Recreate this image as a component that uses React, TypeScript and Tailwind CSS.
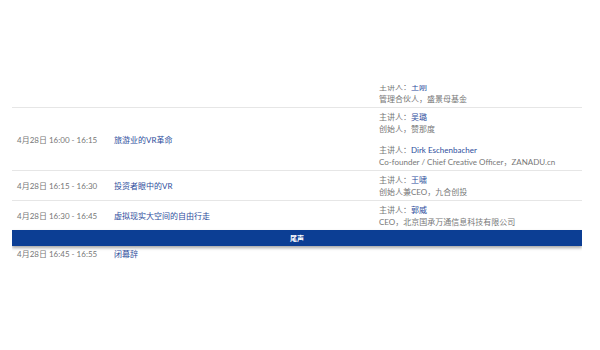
const font = { fontFamily: '"Lato", "Noto Sans CJK SC", sans-serif' };

type Speaker = { name: string; title: string };
type Row = { time: string; topic: string; speakers: Speaker[] };

const rows: Row[] = [
  {
    time: "4月28日 15:45 - 16:00",
    topic: "",
    speakers: [{ name: "王刚", title: "管理合伙人，盛景母基金" }],
  },
  {
    time: "4月28日 16:00 - 16:15",
    topic: "旅游业的VR革命",
    speakers: [
      { name: "吴璐", title: "创始人，赞那度" },
      { name: "Dirk Eschenbacher", title: "Co-founder / Chief Creative Officer，ZANADU.cn" },
    ],
  },
  {
    time: "4月28日 16:15 - 16:30",
    topic: "投资者眼中的VR",
    speakers: [{ name: "王啸", title: "创始人兼CEO，九合创投" }],
  },
  {
    time: "4月28日 16:30 - 16:45",
    topic: "虚拟现实大空间的自由行走",
    speakers: [{ name: "郭威", title: "CEO，北京国承万通信息科技有限公司" }],
  },
];

function AgendaRow({ row, first }: { row: Row; first?: boolean }) {
  return (
    <div className={`flex items-center pt-[3px] pb-[2px] ${first ? "" : "border-t border-[#e6e6e6]"}`}>
      <div className={`w-[97px] shrink-0 pl-[5px] text-[#777] ${first ? "invisible" : ""}`}>{row.time}</div>
      <div className="w-[265px] shrink-0 pl-[5px] text-[#2d4d9c]">{row.topic}</div>
      <div className="flex flex-1 flex-col gap-[9px] pl-[5px]">
        {row.speakers.map((s) => (
          <div key={s.name}>
            <div className="text-[#777]">
              主讲人：<span className="text-[#2d4d9c]">{s.name}</span>
            </div>
            <div className="text-[#777]">{s.title}</div>
          </div>
        ))}
      </div>
    </div>
  );
}

export default function App() {
  return (
    <div className="h-[350px] w-[600px] bg-white" style={font}>
      <div className="h-[85px]" />
      <div className="ml-[12px] mr-[18px] h-[180px] overflow-hidden text-[8px] leading-[12px]">
        <div className="-mt-[7px]">
          {rows.map((r, i) => (
            <AgendaRow key={r.time} row={r} first={i === 0} />
          ))}
          <div className="flex h-[16px] items-center justify-center bg-[#0c3e94] text-[7px] font-bold text-white shadow-[0_2px_3px_rgba(0,0,0,0.35)]">
            尾声
          </div>
          <div className="flex items-center py-[2px]">
            <div className="w-[97px] shrink-0 pl-[5px] text-[#777]">4月28日 16:45 - 16:55</div>
            <div className="w-[265px] shrink-0 pl-[5px] text-[#2d4d9c]">闭幕辞</div>
          </div>
        </div>
      </div>
    </div>
  );
}
